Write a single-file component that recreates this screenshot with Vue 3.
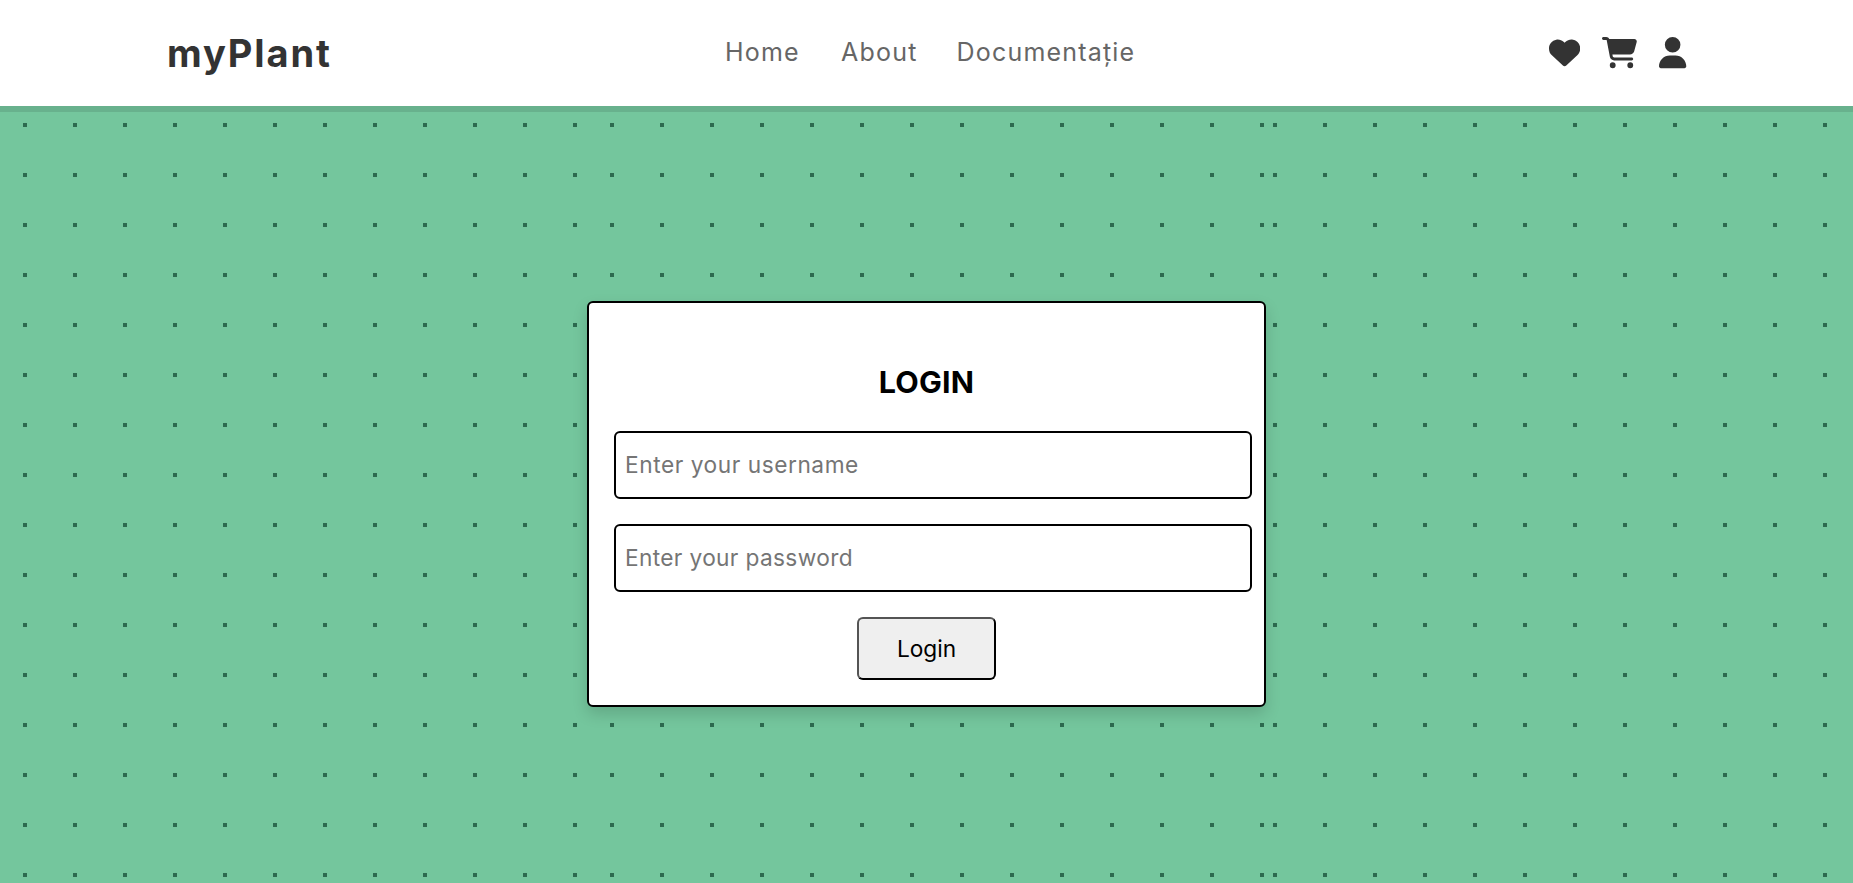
<script setup>
import { ref } from 'vue'

const username = ref('')
const password = ref('')
const links = [
  { label: 'Home', cls: 'home' },
  { label: 'About', cls: 'about' },
  { label: 'Documentație', cls: 'docs' },
]
const icons = [
  {
    name: 'Favorites',
    cls: 'heart',
    box: '0 0 512 512',
    d: 'M47.6 300.4L228.3 469.1c7.5 7 17.4 10.9 27.7 10.9s20.2-3.9 27.7-10.9L464.4 300.4c30.4-28.3 47.6-68 47.6-109.5v-5.8c0-69.9-50.5-129.5-119.4-141C347 36.5 300.6 51.4 268 84L256 96 244 84c-32.6-32.6-79-47.5-124.6-39.9C50.5 55.6 0 115.2 0 185.1v5.8c0 41.5 17.2 81.2 47.6 109.5z',
  },
  {
    name: 'Cart',
    cls: 'cart',
    box: '0 0 576 512',
    d: 'M0 24C0 10.7 10.7 0 24 0H69.5c22 0 41.5 12.8 50.6 32h411c26.3 0 45.5 25 38.6 50.4l-41 152.3c-8.5 31.4-37 53.3-69.5 53.3H170.7l5.4 28.5c2.2 11.3 12.1 19.5 23.6 19.5H488c13.3 0 24 10.7 24 24s-10.7 24-24 24H199.7c-34.6 0-64.3-24.6-70.7-58.5L77.4 54.5c-.7-3.8-4-6.5-7.9-6.5H24C10.7 48 0 37.3 0 24zM128 464a48 48 0 1 1 96 0 48 48 0 1 1 -96 0zm336-48a48 48 0 1 1 0 96 48 48 0 1 1 0-96z',
  },
  {
    name: 'Account',
    cls: 'user',
    box: '0 0 448 512',
    d: 'M224 256A128 128 0 1 0 224 0a128 128 0 1 0 0 256zm-45.7 48C79.8 304 0 383.8 0 482.3C0 498.7 13.3 512 29.7 512H418.3c16.4 0 29.7-13.3 29.7-29.7C448 383.8 368.2 304 269.7 304H178.3z',
  },
]
</script>

<template>
  <div class="page dots">
    <header class="bar">
      <a class="brand">myPlant</a>
      <nav class="nav">
        <a v-for="l in links" :key="l.label" :class="['link', l.cls]">{{ l.label }}</a>
      </nav>
      <div class="icons">
        <svg v-for="i in icons" :key="i.name" :class="['icon', i.cls]" :viewBox="i.box" :aria-label="i.name">
          <path :d="i.d" />
        </svg>
      </div>
    </header>
    <main class="column dots">
      <form class="card" @submit.prevent>
        <h2 class="title">LOGIN</h2>
        <input v-model="username" class="field user-field" type="text" placeholder="Enter your username" />
        <input v-model="password" class="field pass-field" type="password" placeholder="Enter your password" />
        <button class="submit" type="submit">Login</button>
      </form>
    </main>
  </div>
</template>

<style>
body {
  margin: 0;
}
</style>

<style scoped>
.page {
  display: flex;
  flex-direction: column;
  align-items: center;
  height: 883px;
  overflow: hidden;
  font-family: Inter, "Open Sans", sans-serif;
}
.dots {
  background-color: #74c69d;
  background-image: radial-gradient(circle, #2d6a4f 2.3px, transparent 2.3px);
  background-size: 50px 50px;
}
.bar {
  position: relative;
  box-sizing: border-box;
  width: 100%;
  height: 106px;
  flex: none;
  padding: 0 166.5px 0 167px;
  display: grid;
  grid-template-columns: 558px 1fr auto;
  align-items: center;
  background: #fff;
  box-shadow: 0 6px 0 rgba(0, 0, 0, 0.1);
}
.brand {
  color: #333;
  font-size: 38px;
  font-weight: 700;
  letter-spacing: 1.9px;
  padding-bottom: 1px;
}
.nav {
  display: grid;
  grid-template-columns: 116px 115.5px auto;
  justify-content: start;
  padding-bottom: 2px;
}
.link {
  color: #666;
  font-size: 25px;
  line-height: 36px;
  letter-spacing: 1.2px;
}
.icons {
  display: flex;
  gap: 22.2px;
}
.icon {
  height: 31.2px;
  fill: #333;
}
.column {
  width: 679px;
  flex: 1;
  background-position: 0 -106px;
}
.card {
  box-sizing: border-box;
  height: 406px;
  margin-top: 195px;
  padding: 25px;
  display: flex;
  flex-direction: column;
  align-items: flex-start;
  background: #fff;
  border: 2px solid #000;
  border-radius: 6px;
  box-shadow: 0 7px 15px rgba(0, 0, 0, 0.15);
}
.title {
  align-self: center;
  margin: 29px 0 24px;
  height: 50px;
  line-height: 50px;
  font-size: 30.5px;
  font-weight: 700;
  letter-spacing: 0.2px;
}
.field {
  box-sizing: border-box;
  width: 638px;
  height: 68px;
  flex: none;
  margin: 0 0 25px;
  padding: 0 8px 2px 9px;
  background: #fff;
  border: 2px solid #000;
  border-radius: 6px;
  font-family: inherit;
  font-size: 22.7px;
  letter-spacing: 0.55px;
}
.pass-field {
  letter-spacing: 0.35px;
}
.field::placeholder {
  color: #757575;
}
.submit {
  align-self: center;
  box-sizing: border-box;
  width: 139px;
  height: 63px;
  padding: 0;
  background: #efefef;
  border: 2px outset #000;
  border-radius: 6px;
  color: #000;
  font-family: inherit;
  font-size: 22.7px;
}
</style>
